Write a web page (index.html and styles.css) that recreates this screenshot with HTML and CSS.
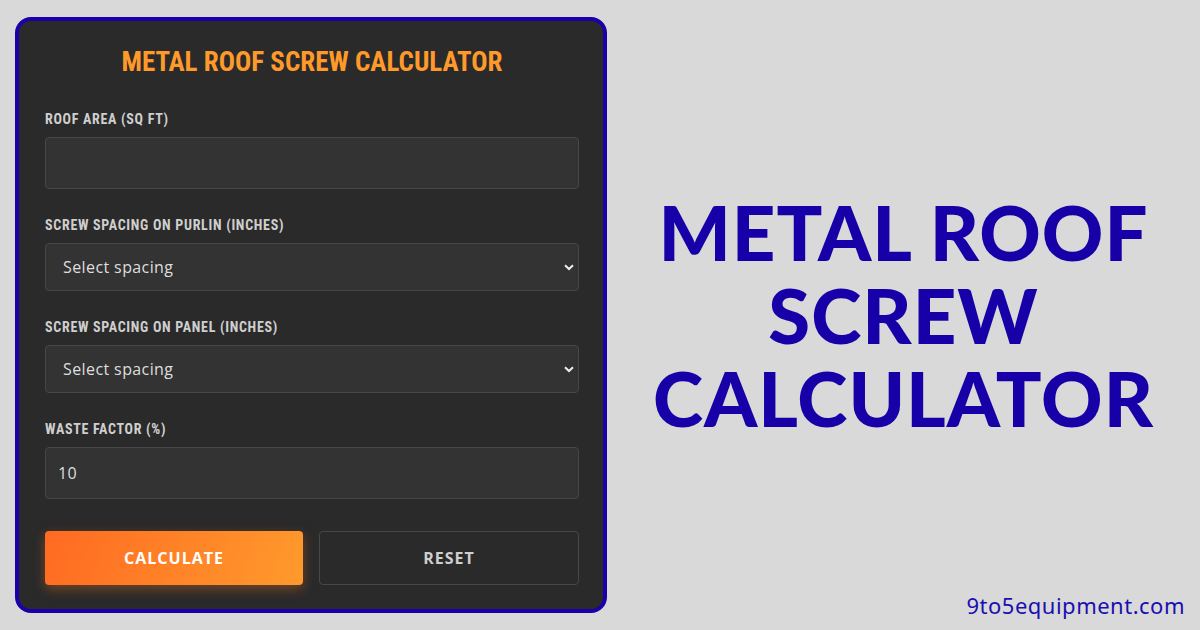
FILE: index.html
```html
<!DOCTYPE html>
<html lang="en">
<head>
<meta charset="UTF-8">
<meta name="viewport" content="width=device-width, initial-scale=1.0">
<title>Metal Roof Screw Calculator</title>
<link rel="stylesheet" href="styles.css">
</head>
<body>
  <div class="page">
    <div class="calc-card">
      <h2 class="calc-title">METAL ROOF SCREW CALCULATOR</h2>

      <div class="field">
        <label for="roof-area">ROOF AREA (SQ FT)</label>
        <input type="text" id="roof-area" class="tall">
      </div>

      <div class="field">
        <label for="purlin">SCREW SPACING ON PURLIN (INCHES)</label>
        <div class="select-wrap">
          <select id="purlin">
            <option selected>Select spacing</option>
            <option>12</option>
            <option>24</option>
          </select>
          <svg class="chevron" width="10" height="7" viewBox="0 0 10 7"><path d="M1 1.2 L5 5 L9 1.2" fill="none" stroke="#eee" stroke-width="2"/></svg>
        </div>
      </div>

      <div class="field">
        <label for="panel">SCREW SPACING ON PANEL (INCHES)</label>
        <div class="select-wrap">
          <select id="panel">
            <option selected>Select spacing</option>
            <option>9</option>
            <option>12</option>
          </select>
          <svg class="chevron" width="10" height="7" viewBox="0 0 10 7"><path d="M1 1.2 L5 5 L9 1.2" fill="none" stroke="#eee" stroke-width="2"/></svg>
        </div>
      </div>

      <div class="field">
        <label for="waste">WASTE FACTOR (%)</label>
        <input type="text" id="waste" class="tall" value="10">
      </div>

      <div class="buttons">
        <button class="btn btn-calc">CALCULATE</button>
        <button class="btn btn-reset">RESET</button>
      </div>
    </div>

    <div class="promo">
      <h1 class="promo-title">METAL ROOF<br>SCREW<br>CALCULATOR</h1>
    </div>
  </div>
  <div class="site">9to5equipment.com</div>
</body>
</html>
```

FILE: styles.css
```css
body {
  margin: 0;
  background-color: #d9d9d9;
  font-family: "Open Sans", Arial, sans-serif;
  width: 1200px;
  height: 630px;
  overflow: hidden;
  position: relative;
}
.page {
  display: flex;
  padding: 17px 0 0 15px;
}
.calc-card {
  box-sizing: border-box;
  width: 592px;
  height: 596px;
  background-color: #2a2a2a;
  border: 4px solid #1a00a8;
  border-radius: 16px;
  padding: 21px 24px 0 26px;
}
.calc-title {
  margin: 0 0 29px 0;
  text-align: center;
  color: #ff9a2a;
  font-family: Roboto, sans-serif;
  font-stretch: condensed;
  font-weight: bold;
  font-size: 27px;
  line-height: 40px;
}
.field {
  margin-bottom: 28px;
}
.field label {
  display: block;
  color: #cfcfcf;
  font-family: Roboto, sans-serif;
  font-stretch: condensed;
  font-weight: bold;
  font-size: 14px;
  letter-spacing: 0.7px;
  line-height: 16px;
  margin-bottom: 10px;
}
input, select {
  box-sizing: border-box;
  width: 100%;
  background-color: #333333;
  border: 1px solid #474747;
  border-radius: 4px;
  color: #dedede;
  font-family: "Open Sans", Arial, sans-serif;
  font-size: 16px;
  letter-spacing: 0.4px;
  outline: none;
}
input.tall {
  height: 52px;
  padding: 0 12px;
}
select {
  appearance: none;
  height: 48px;
  padding: 0 17px;
}
.select-wrap {
  position: relative;
}
.chevron {
  position: absolute;
  right: 5px;
  top: 21px;
}
.buttons {
  display: flex;
  gap: 16px;
  margin-top: 32px;
}
.btn {
  flex: 1;
  height: 54px;
  border-radius: 4px;
  font-family: "Open Sans", Arial, sans-serif;
  font-weight: bold;
  font-size: 16px;
  letter-spacing: 1px;
  cursor: pointer;
}
.btn-calc {
  border: none;
  color: #ffffff;
  background: linear-gradient(110deg, #ff6a22, #ff9a2c);
  box-shadow: 0 4px 12px rgba(255, 120, 30, 0.35);
}
.btn-reset {
  background: transparent;
  border: 1px solid #474747;
  color: #cfcfcf;
}
.promo {
  flex: 1;
  display: flex;
  justify-content: center;
  padding-top: 173px;
}
.promo-title {
  margin: 0;
  text-align: center;
  color: #1700a8;
  font-family: Lato, "Noto Sans", sans-serif;
  font-weight: 900;
  font-size: 76px;
  line-height: 83px;
  letter-spacing: 1px;
}
.site {
  position: absolute;
  right: 15px;
  bottom: 10px;
  color: #1a0fb0;
  font-family: "Noto Sans", sans-serif;
  font-size: 22px;
  letter-spacing: 0.5px;
}
```
